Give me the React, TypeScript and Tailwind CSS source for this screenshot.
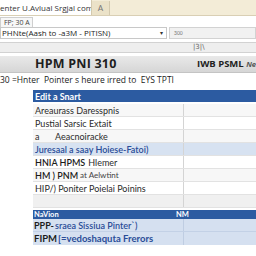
import React from "react";

const Row = ({ children, className = "" }: { children: React.ReactNode; className?: string }) => (
  <div className={`flex h-[13px] border-b border-[#e2e2e2] ${className}`}>
    <div className="w-[150px] flex items-center pl-[2px] whitespace-nowrap overflow-hidden">{children}</div>
    <div className="w-px bg-[#d4d4d4]" />
    <div className="flex-1" />
  </div>
);

export default function App() {
  return (
    <div className="w-[256px] h-[256px] overflow-hidden bg-white font-['Lato',sans-serif] text-[#2b2b2b] leading-none">
      {/* title bar */}
      <div className="h-[16px] bg-[#f3ecd7] flex items-end border-b border-[#d9cfb4]">
        <div className="h-[15px] w-[92px] bg-white border-r border-[#d3c9ae] flex items-center text-[8px] font-['Open_Sans',sans-serif] text-[#333] whitespace-nowrap overflow-hidden">
          enter U.Avlual Srgjal com
        </div>
        <div className="h-[14px] w-[18px] bg-[#ebe2c8] border-r border-[#d3c9ae] flex items-center justify-center text-[8px] text-[#777]">
          A
        </div>
      </div>
      {/* small tab */}
      <div className="h-[11px] flex items-end">
        <div className="h-[10px] w-[33px] border border-b-0 border-[#cfcfcf] bg-[#f7f7f7] flex items-center pl-[3px] text-[7px] font-['Open_Sans',sans-serif] text-[#444]">
          FP; 30 A
        </div>
      </div>
      {/* select row */}
      <div className="h-[12px] flex">
        <div className="w-[167px] bg-white border border-[#c8c8c8] flex items-center pl-[1px] pr-[3px] text-[8px] font-['Open_Sans',sans-serif] text-[#222]">
          <span className="flex-1 whitespace-nowrap">PHNte(Aash to -a3M - PITISN)</span>
          <span className="text-[6px] text-[#333]">▾</span>
        </div>
        <div className="flex-1 ml-[2px] bg-[#f1f1f1] border border-[#d2d2d2] flex items-center pl-[4px] text-[5px] text-[#777]">
          300
        </div>
      </div>
      {/* band */}
      <div className="h-[3px]" />
      <div className="h-[11px] bg-[#eeeeee] border-y border-[#d2d2d2] flex items-center">
        <span className="ml-[193px] text-[7px] text-[#666] font-['DejaVu_Sans',sans-serif]">|3|\</span>
      </div>
      <div className="h-[3px]" />
      {/* header bar */}
      <div className="h-[17px] bg-gradient-to-b from-[#e9e9e9] to-[#d6d6d6] border-b border-[#c4c4c4] flex items-center overflow-hidden">
        <span className="ml-[35px] text-[12.5px] font-bold text-[#1e1e1e] font-['Open_Sans',sans-serif] tracking-[0.2px]">HPM PNI 310</span>
        <span className="ml-auto text-[9.5px] font-bold text-[#222] whitespace-nowrap font-['Open_Sans',sans-serif]">
          IWB PSML <span className="italic text-[#555] text-[7.5px]">Ne</span>
        </span>
      </div>
      {/* info row */}
      <div className="h-[15px] flex items-center text-[8.5px] text-[#222] whitespace-nowrap font-['Open_Sans',sans-serif]">
        30 =Hnter&nbsp; Pointer s heure irred to&nbsp; EYS TPTI
      </div>
      <div className="h-[2px]" />
      {/* table 1 */}
      <div className="ml-[33px]">
        <div className="h-[12px] bg-[#2c5ba1] flex items-center pl-[2px] text-[9px] font-bold text-white">Edit a Snart</div>
        <div className="h-[2px]" />
        <Row className="bg-[#f7f7f7]">
          <span className="text-[9px]">Areaurass Daresspnis</span>
        </Row>
        <Row>
          <span className="text-[9px]">Pustial Sarsic Extait</span>
        </Row>
        <Row className="bg-[#f7f7f7]">
          <span className="text-[9px] w-[20px]">a</span>
          <span className="text-[9px]">Aeacnoiracke</span>
        </Row>
        <Row className="bg-[#d7e2f1]">
          <span className="text-[9px] text-[#2a4d98] font-semibold">Juresaal a saay Hoiese-Fatoi)</span>
        </Row>
        <Row>
          <span className="text-[9px] font-semibold text-[#1c1c1c]">HNIA HPMS</span>
          <span className="text-[9px] ml-[3px]">Hlemer</span>
        </Row>
        <Row className="bg-[#f7f7f7]">
          <span className="text-[9px] font-semibold text-[#1c1c1c]">HM ) PNM</span>
          <span className="text-[8px] ml-[2px] text-[#444]">at Aelwtint</span>
        </Row>
        <Row>
          <span className="text-[9px]">HIP/) Poniter Poielai Poinins</span>
        </Row>
        <Row className="bg-[#f0f0f0]">
          <span />
        </Row>
        <div className="h-[2px]" />
        {/* table 2 */}
        <div className="h-[9px] bg-[#2c5ba1] flex items-center text-[7.5px] font-bold text-white">
          <span className="w-[143px] pl-[1px]">NaVion</span>
          <span>NM</span>
        </div>
        <div className="flex h-[13px] bg-[#d5e0f0] border-b border-[#c3d1e6]">
          <div className="w-[150px] flex items-center pl-[1px] whitespace-nowrap overflow-hidden text-[9px]">
            <span className="font-bold text-[#1c1c1c]">PPP-</span>
            <span className="text-[#2a4d98] ml-[1px] font-semibold">sraea Sissiua Pinter`)</span>
          </div>
          <div className="w-px bg-[#bfcde2]" />
        </div>
        <div className="flex h-[13px] bg-[#d5e0f0]">
          <div className="w-[150px] flex items-center pl-[1px] whitespace-nowrap overflow-visible text-[9.5px]">
            <span className="font-bold text-[#1c1c1c]">FIPM</span>
            <span className="text-[#2a4d98] ml-[1px] font-bold">[=vedoshaquta Frerors</span>
          </div>
          <div className="w-px bg-[#bfcde2]" />
        </div>
      </div>
    </div>
  );
}
